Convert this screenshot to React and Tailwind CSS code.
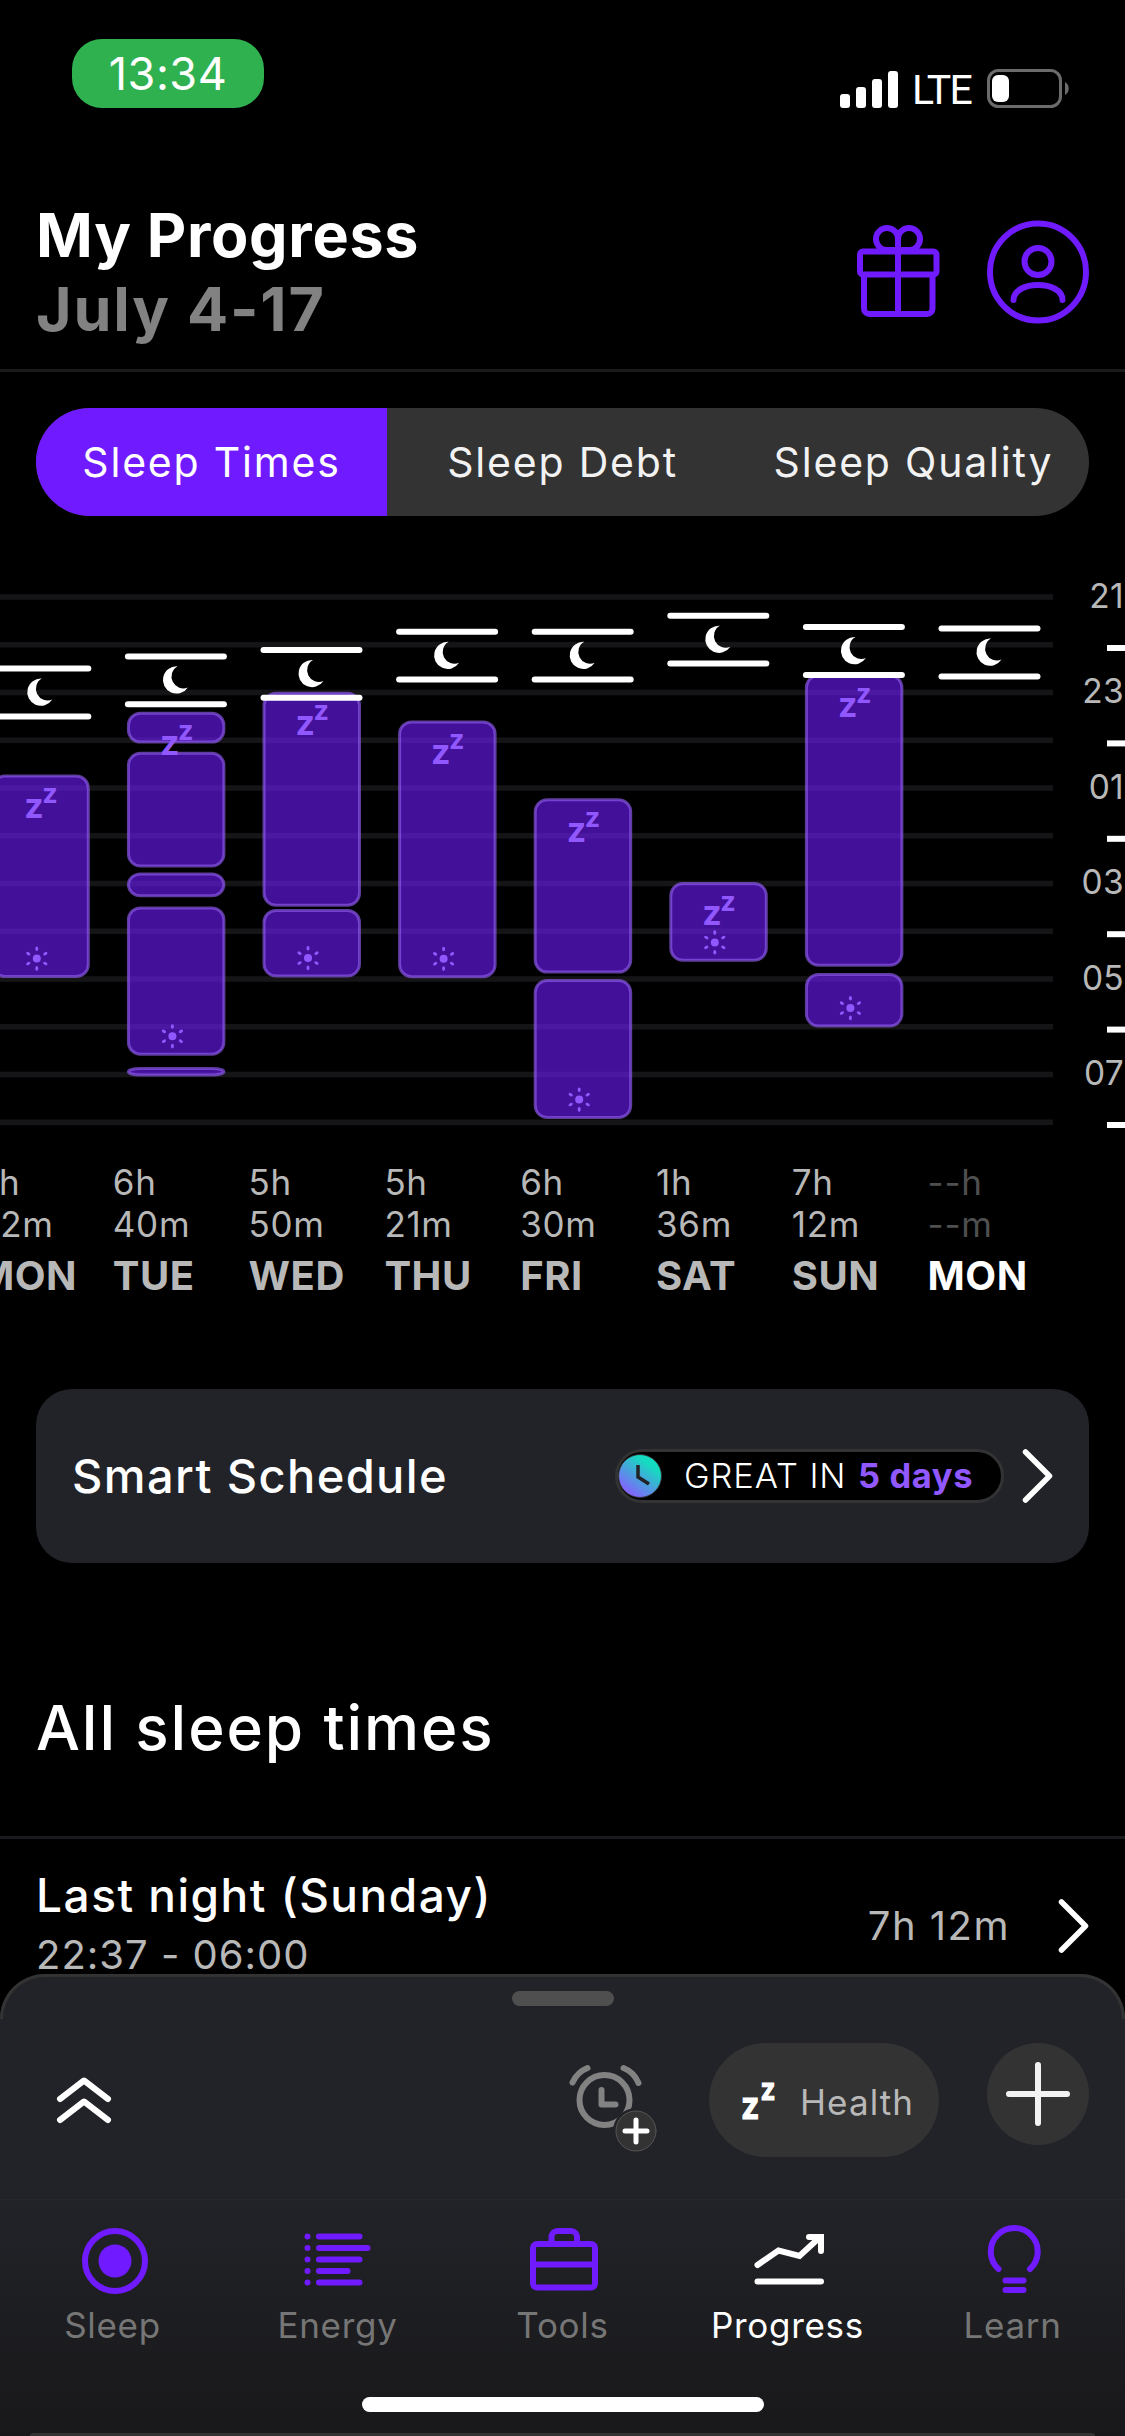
const GRID_LINES = Array.from({ length: 12 }, (_, i) => 187 + i * 47.75);
const HOURS = ['21', '23', '01', '03', '05', '07'];

// window = top of the bedtime window, segments = [top, bottom] of each sleep block
const NIGHTS = [
  { day: 'MON', h: '5h', m: '42m', window: 258.6, segments: [[364.6, 568]], wake: 568 },
  {
    day: 'TUE', h: '6h', m: '40m', window: 246.4,
    segments: [[301.8, 333.6], [341.8, 457.5], [462.5, 487.2], [496.4, 645.7], [657, 666.4]],
    wake: 645.7,
  },
  { day: 'WED', h: '5h', m: '50m', window: 240, segments: [[281.8, 496.8], [498.9, 567.5]], wake: 567.5 },
  { day: 'THU', h: '5h', m: '21m', window: 221.8, segments: [[310.4, 568.2]], wake: 568.2 },
  { day: 'FRI', h: '6h', m: '30m', window: 221.8, segments: [[388.2, 563.6], [569, 709]], wake: 709 },
  { day: 'SAT', h: '1h', m: '36m', window: 205.7, segments: [[472, 551.8]], wake: 551.8 },
  { day: 'SUN', h: '7h', m: '12m', window: 217.1, segments: [[264, 556.8], [563, 617.5]], wake: 617.5 },
  { day: 'MON', h: '--h', m: '--m', window: 218.6, segments: [], today: true },
];

function StatusBar() {
  return (
    <div className="flex h-[120px] items-start justify-between pl-[72px] pr-[55px]">
      <div className="mt-[39px] flex h-[69px] w-[192px] items-center justify-center rounded-[30px] bg-[#2fb14f] text-[45px] leading-none text-white tracking-[0.5px]">
        13:34
      </div>
      <div className="mt-[69px] flex h-[39px] items-center">
        <svg width="58" height="38" viewBox="0 0 58 38" fill="#fff">
          <rect x="0" y="24" width="10" height="14" rx="3" />
          <rect x="16" y="17" width="10" height="21" rx="3" />
          <rect x="32" y="9" width="10" height="29" rx="3" />
          <rect x="48" y="1" width="10" height="37" rx="3" />
        </svg>
        <span className="ml-[14px] mt-[3px] w-[75px] font-['Roboto'] text-[41px] leading-none text-white tracking-[-1.8px]">
          LTE
        </span>
        <svg width="83" height="39" viewBox="0 0 83 39">
          <rect x="1.5" y="1.5" width="72" height="36" rx="10" fill="none" stroke="#6b6b6b" strokeWidth="3" />
          <rect x="5" y="6" width="17" height="27" rx="6" fill="#fff" />
          <path d="M78 13c5 2.500 5 10.500 0 13z" fill="#6b6b6b" />
        </svg>
      </div>
    </div>
  );
}

function GiftIcon() {
  return (
    <svg width="83" height="94" viewBox="0 0 83 94" fill="none" stroke="#701aff" strokeWidth="6" strokeLinejoin="round">
      <rect x="3" y="26.500" width="76.500" height="23" rx="3" />
      <path d="M7 50v33.500a5.500 5.500 0 0 0 5.500 5.500h57.500a5.500 5.500 0 0 0 5.500-5.500V50M41 27v62" />
      <path d="M41 25H29.500A11 11 0 1 1 41 14.500zM41 25h11.500A11 11 0 1 0 41 14.500z" />
    </svg>
  );
}

function ProfileIcon() {
  return (
    <svg width="102" height="104" viewBox="0 0 102 104" fill="none" stroke="#701aff" strokeWidth="6" strokeLinecap="round">
      <ellipse cx="51" cy="52" rx="48" ry="48.500" />
      <circle cx="51" cy="41.500" r="13.500" />
      <path d="M26.500 80c0-20 49-20 49 0" />
    </svg>
  );
}

function Header() {
  return (
    <header className="flex h-[252px] items-start justify-between border-b-[3px] border-[#1a1a1c] pl-[36px] pr-[36px]">
      <div className="pt-[78px] text-[61px] font-bold leading-[74px] whitespace-nowrap">
        <h1 className="text-white tracking-[0.7px]">My Progress</h1>
        <p className="text-[#828282] tracking-[1.800px]">July 4-17</p>
      </div>
      <div className="flex items-center gap-[47px] pt-[100px]">
        <GiftIcon />
        <ProfileIcon />
      </div>
    </header>
  );
}

function Tabs() {
  return (
    <div className="mx-[36px] mt-[36px] grid h-[108px] grid-cols-3 overflow-hidden rounded-[54px] bg-[#333] text-[41px] leading-[109px] text-[#f2f2f2] tracking-[1.8px] whitespace-nowrap">
      <button className="bg-[#701aff] text-white">Sleep Times</button>
      <button>Sleep Debt</button>
      <button>Sleep Quality</button>
    </div>
  );
}

function Sun({ x, y }) {
  return (
    <g fill="#9158ff" transform={`translate(${x} ${y})`}>
      <circle r="4" />
      {[0, 60, 120, 180, 240, 300].map((a) => (
        <ellipse key={a} cy="-9.800" rx="1.500" ry="2.300" transform={`rotate(${a})`} />
      ))}
    </g>
  );
}

function Night({ night, x }) {
  const { segments, wake } = night;
  return (
    <g>
      {segments.map(([top, bottom]) => (
        <rect
          key={top}
          x={x + 1.5}
          y={top + 1.5}
          width="95.500"
          height={bottom - top - 3}
          rx="12"
          fill="#701aff"
          fillOpacity="0.6"
          stroke="#8f5cf0"
          strokeOpacity="0.65"
          strokeWidth="3"
        />
      ))}
      {segments.length > 0 && (
        <>
          <g fill="#9158ff" fontWeight="700">
            <text x={x + 33} y={segments[0][0] + 43.3} fontSize="34">z</text>
            <text x={x + 51} y={segments[0][0] + 28.5} fontSize="27">z</text>
          </g>
          <Sun x={x + 45.5} y={wake - 19.4} />
        </>
      )}
      <g fill="#fff">
        <rect x={x - 2} y={night.window - 3} width="102" height="6" rx="3" />
        <rect x={x - 2} y={night.window + 44.8} width="102" height="6" rx="3" />
        <path
          transform={`translate(${x + 33.5} ${night.window + 10})`}
          d="M17 0A13.600 13.600 0 1 0 27.500 21A11.760 11.760 0 0 1 17 0z"
        />
      </g>
    </g>
  );
}

function SleepChart() {
  return (
    <svg width="1125" height="740" viewBox="0 0 1125 740" className="-mt-[106px] block">
      {GRID_LINES.map((y) => (
        <rect key={y} x="0" y={y - 2.8} width="1053" height="5.600" fill="#151517" />
      ))}
      {NIGHTS.map((night, i) => (
        <Night key={i} night={night} x={-8.7 + i * 135.6} />
      ))}
      {HOURS.map((hour, i) => (
        <g key={hour}>
          <text x="1124" y={197.5 + i * 95.5} textAnchor="end" fontSize="33.500" letterSpacing="0.300" fill="#b8b8b8">
            {hour}
          </text>
          <rect x="1107" y={235 + i * 95.4} width="18" height="6" fill="#fff" />
        </g>
      ))}
    </svg>
  );
}

function DayLabels() {
  return (
    <div className="-ml-[23px] flex h-[164px] w-[1148px] overflow-hidden pt-[11px] whitespace-nowrap">
      {NIGHTS.map((n, i) => (
        <div key={i} className={`w-[135.8px] shrink-0 ${n.today ? 'text-white' : 'text-[#b8b8b8]'}`}>
          <div className={`text-[35px] leading-[42px] tracking-[0.7px] ${n.today ? 'text-[#4f4f4f]' : ''}`}>
            <div>{n.h}</div>
            <div>{n.m}</div>
          </div>
          <div className="pt-[8px] text-[40px] font-bold leading-[46px] tracking-[0.5px]">{n.day}</div>
        </div>
      ))}
    </div>
  );
}

function Chevron() {
  return (
    <svg width="32" height="56" viewBox="0 0 32 56" fill="none" stroke="#fff" strokeWidth="5.500" strokeLinecap="round" strokeLinejoin="round">
      <path d="M3.500 4l24 24-24 24" />
    </svg>
  );
}

function SmartSchedule() {
  return (
    <div className="mx-[36px] mt-[75px] flex h-[174px] items-center rounded-[36px] bg-[#222328] pl-[36px] pr-[35px] whitespace-nowrap">
      <span className="flex-1 text-[47px] font-medium text-white tracking-[1.4px]">Smart Schedule</span>
      <div className="mr-[18px] flex h-[54px] w-[389px] items-center rounded-full border-[3px] border-[#333] bg-black text-[34.5px]">
        <svg width="44" height="44" viewBox="0 0 44 44">
          <defs>
            <linearGradient id="clock" x1="0.800" y1="0.100" x2="0.200" y2="0.900">
              <stop offset="0.150" stopColor="#14dcc0" />
              <stop offset="1" stopColor="#8560ff" />
            </linearGradient>
          </defs>
          <circle cx="22" cy="22" r="21.500" fill="url(#clock)" stroke="#333" />
          <path d="M20 11v12l11 7" fill="none" stroke="#222328" strokeWidth="3.500" />
        </svg>
        <span className="ml-[22px] w-[174px] font-light text-white tracking-[0.9px]">GREAT IN</span>
        <span className="font-bold text-[#9158ff] tracking-[0.6px]">5 days</span>
      </div>
      <Chevron />
    </div>
  );
}

function SleepList() {
  return (
    <section className="h-[411px] whitespace-nowrap">
      <h2 className="h-[273px] pl-[36px] pt-[130px] text-[62px] font-medium leading-[70px] text-white tracking-[1.9px]">
        All sleep times
      </h2>
      <div className="flex items-center border-t-[3px] border-[#1a1b1e] pl-[36px] pr-[35px] pt-[27px]">
        <div className="flex-1">
          <p className="text-[46px] font-medium leading-[58px] text-white tracking-[1.5px]">Last night (Sunday)</p>
          <p className="text-[40px] leading-[61px] text-[#b8b8b8] tracking-[1px]">22:37 - 06:00</p>
        </div>
        <span className="mr-[48px] text-[40px] text-[#b8b8b8] tracking-[1.5px]">7h 12m</span>
        <Chevron />
      </div>
    </section>
  );
}

function AlarmIcon() {
  return (
    <svg width="94" height="94" viewBox="0 0 94 94" fill="none" strokeLinecap="round" strokeLinejoin="round">
      <g stroke="#828282" strokeWidth="6">
        <circle cx="39.500" cy="40" r="25" />
        <path d="M36.500 30v14.500h14" />
        <path d="M7.500 22.500C10.500 16 16 10.500 22.500 8M58.500 8c6.500 2.500 12 8 15 15" />
      </g>
      <circle cx="71" cy="71" r="23" fill="#222328" />
      <circle cx="71" cy="71" r="20" fill="#333" stroke="#555" />
      <path d="M71 60v22M60 71h22" stroke="#fff" strokeWidth="5" />
    </svg>
  );
}

function SheetActions() {
  return (
    <div className="mt-[24px] flex h-[114px] items-start pl-[56px] pr-[36px]">
      <svg className="mt-[32px]" width="56" height="50" viewBox="0 0 56 50" fill="none" stroke="#fff" strokeWidth="6" strokeLinecap="round" strokeLinejoin="round">
        <path d="M4 24L28 5.500l24 18.500M4 45l24-18.500L52 45" />
      </svg>
      <div className="ml-[453px] mt-[17px]">
        <AlarmIcon />
      </div>
      <button className="ml-[50px] flex h-[114px] w-[230px] items-center rounded-full bg-[#333]">
        <svg className="ml-[30px]" width="44" height="50" viewBox="0 0 44 50" fill="#fff" stroke="#fff" strokeWidth="1" fontWeight="700">
          <text x="2" y="43.500" fontSize="39" textLength="18.500" lengthAdjust="spacingAndGlyphs">z</text>
          <text x="21.500" y="24.500" fontSize="31" textLength="15" lengthAdjust="spacingAndGlyphs">z</text>
        </svg>
        <span className="ml-[17px] mt-[4px] text-[35px] tracking-[1.1px] text-[#b8b8b8]">Health</span>
      </button>
      <button className="ml-[48px] flex h-[102px] w-[102px] items-center justify-center rounded-full bg-[#333]">
        <svg width="66" height="66" viewBox="0 0 66 66" stroke="#f2f2f2" strokeWidth="6" strokeLinecap="round">
          <path d="M33 4v58M4 33h58" />
        </svg>
      </button>
    </div>
  );
}

const NAV = [
  {
    label: 'Sleep',
    icon: (
      <g stroke="#701aff" strokeWidth="6">
        <circle cx="40" cy="37" r="30" />
        <circle cx="40" cy="37" r="16.500" fill="#701aff" stroke="none" />
      </g>
    ),
  },
  {
    label: 'Energy',
    icon: (
      <g stroke="#701aff" strokeWidth="6" strokeLinecap="round">
        <path d="M7.500 12.500h0M7.500 24h0M7.500 35.500h0M7.500 47h0M7.500 58.500h0" />
        <path d="M19 12.500h40.500M19 24h48.500M19 35.500h40.500M19 47h28.500M19 58.500h40.500" />
      </g>
    ),
  },
  {
    label: 'Tools',
    icon: (
      <g stroke="#701aff" strokeWidth="6">
        <rect x="8" y="20" width="62" height="43.500" rx="4" />
        <path d="M8 40.500h62M26.500 20v-7a6 6 0 0 1 6-6h13.500a6 6 0 0 1 6 6v7" />
      </g>
    ),
  },
  {
    label: 'Progress',
    active: true,
    icon: (
      <g stroke="#fff" strokeWidth="6" strokeLinecap="round">
        <path d="M7.500 41L28.500 26.500l21 5.500L69 14M59 13h12v14M7.500 57.500h63.500" />
      </g>
    ),
  },
  {
    label: 'Learn',
    icon: (
      <g stroke="#701aff" strokeWidth="6" strokeLinecap="round">
        <path d="M23.500 45A23.500 23.500 0 1 1 55 45M30.500 56.500h18M30.500 66h18" />
      </g>
    ),
  },
];

function BottomNav() {
  return (
    <nav className="mt-[42px] flex h-[237px] flex-col items-center border-t border-[#26272a] bg-linear-to-b from-[#222328] to-[#18181a]">
      <div className="grid w-full grid-cols-5 pt-[24px]">
        {NAV.map((item) => (
          <div key={item.label} className="flex flex-col items-center">
            <svg width="76" height="72" viewBox="0 0 76 72" fill="none">
              {item.icon}
            </svg>
            <span className={`mt-[8px] text-[35px] leading-[42px] tracking-[0.7px] ${item.active ? 'text-white' : 'text-[#767676]'}`}>
              {item.label}
            </span>
          </div>
        ))}
      </div>
      <div className="mt-[51px] h-[15px] w-[402px] shrink-0 rounded-full bg-white" />
      <div className="mt-[21px] h-[3px] w-[1065px] shrink-0 rounded-t-[3px] bg-[#333]" />
    </nav>
  );
}

export default function App() {
  return (
    <div className="flex h-[2436px] w-[1125px] flex-col overflow-hidden bg-black font-['Inter',sans-serif]">
      <StatusBar />
      <Header />
      <Tabs />
      <SleepChart />
      <DayLabels />
      <SmartSchedule />
      <SleepList />
      <div className="flex h-[462px] shrink-0 flex-col rounded-t-[45px] bg-[#222328]">
        <div className="h-[45px] shrink-0 rounded-t-[45px] border-x-[3px] border-t-[3px] border-[#333]">
          <div className="mx-auto mt-[14px] h-[15px] w-[102px] rounded-full bg-[#4f4f4f]" />
        </div>
        <SheetActions />
        <BottomNav />
      </div>
    </div>
  );
}
